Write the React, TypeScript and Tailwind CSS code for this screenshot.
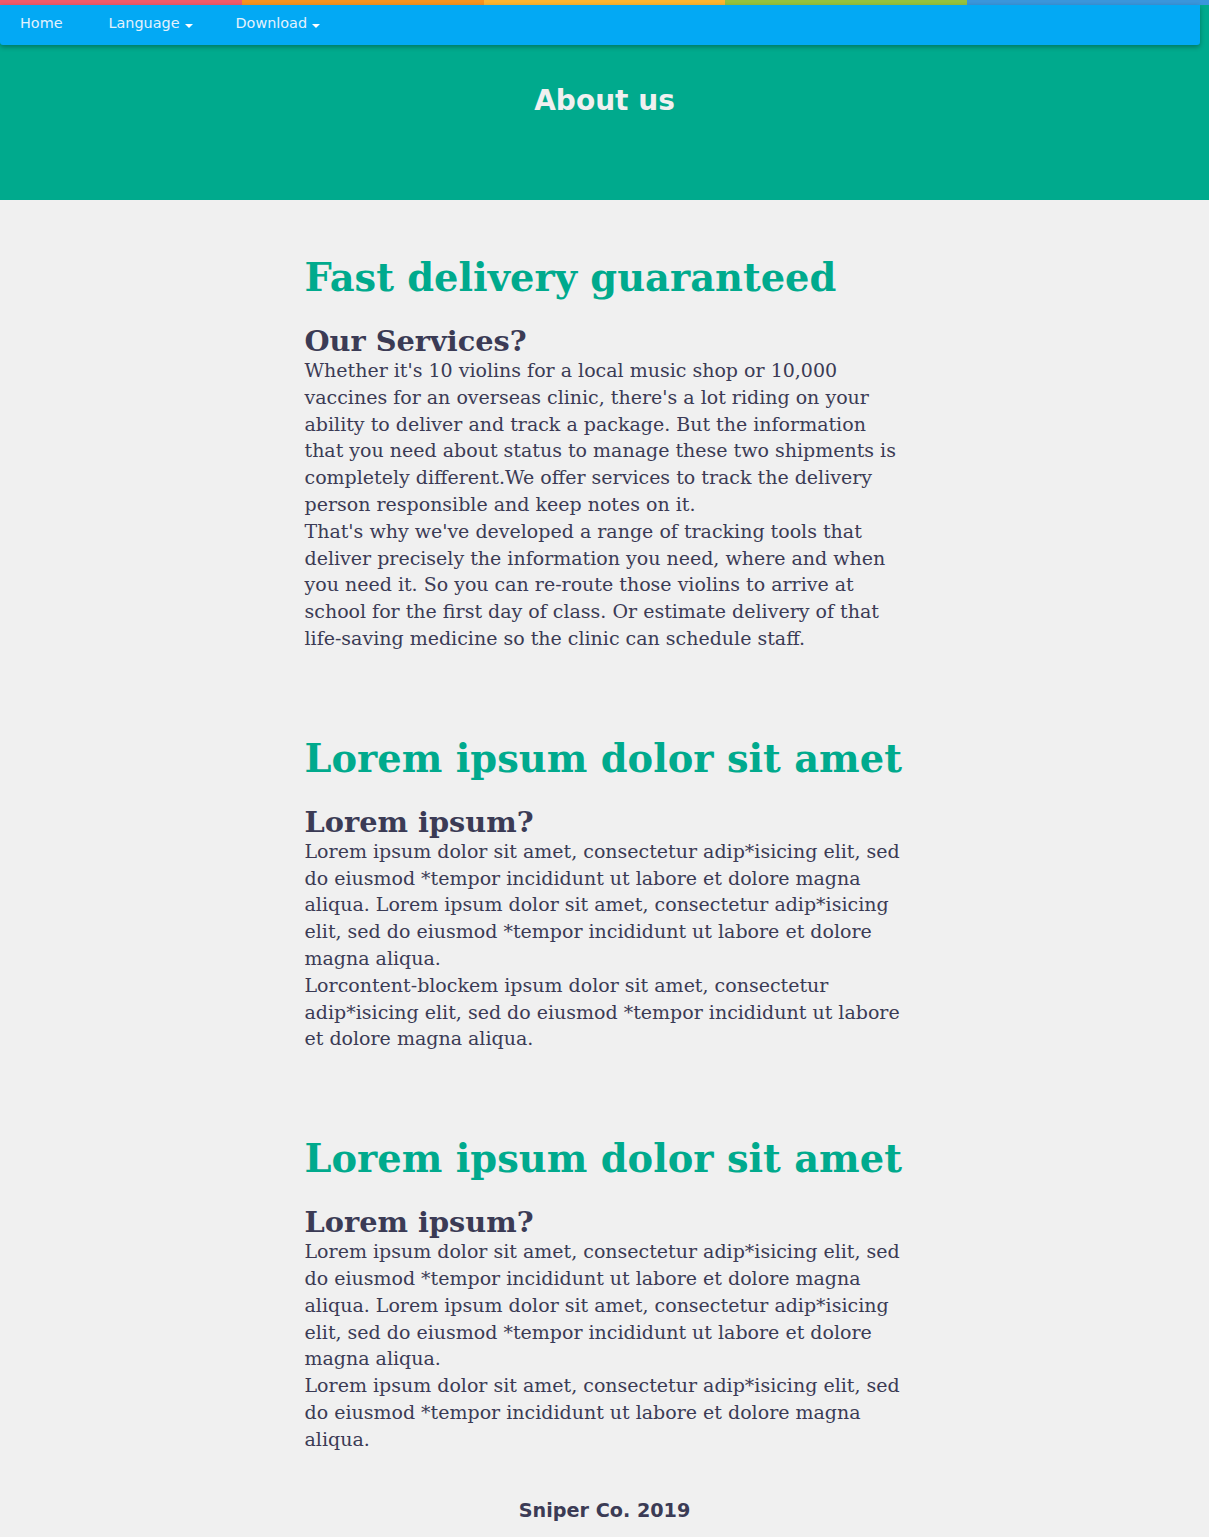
import React from "react";

const Caret = () => (
  <span className="inline-block ml-[5px] align-middle w-0 h-0 border-l-[4px] border-r-[4px] border-t-[4px] border-l-transparent border-r-transparent border-t-white translate-y-[2px]" />
);

const Section = ({ title, sub, paras }: { title: string; sub: string; paras: string[] }) => (
  <section>
    <h1 className="text-[38.4px] leading-[46px] font-bold text-[#00aa8d] whitespace-nowrap">{title}</h1>
    <h2 className="mt-[24px] text-[28.8px] leading-[32px] font-bold text-[#3b3b55]">{sub}</h2>
    {paras.map((p, i) => (
      <p key={i} className="text-[19px] leading-[26.8px] text-[#3b3b55]">{p}</p>
    ))}
  </section>
);

export default function App() {
  return (
    <div className="min-h-[1537px] bg-[#f0f0f0]" style={{ fontFamily: '"DejaVu Serif", serif' }}>
      <div className="flex h-[5px]">
        <div className="flex-1 bg-[#f05a6b]" />
        <div className="flex-1 bg-[#f7931e]" />
        <div className="flex-1 bg-[#fcb52f]" />
        <div className="flex-1 bg-[#95c23d]" />
        <div className="flex-1 bg-[#3a96db]" />
      </div>
      <div className="relative bg-[#00aa8d] h-[195px]">
        <nav
          className="absolute top-0 left-0 w-[1200px] h-[40px] bg-[#03a9f4] rounded-b-[3px] shadow-[0_2px_5px_rgba(0,0,0,0.3)] flex items-center pb-[2px] text-[14.4px] text-[#e3f2fd]"
          style={{ fontFamily: '"DejaVu Sans", sans-serif' }}
        >
          <span className="ml-[20px]">Home</span>
          <span className="ml-[46px]">Language<Caret /></span>
          <span className="ml-[43px]">Download<Caret /></span>
        </nav>
        <div
          className="pt-[79px] text-center text-[28px] font-bold text-[#f0f0f0] leading-[34px]"
          style={{ fontFamily: '"DejaVu Sans", sans-serif' }}
        >
          About us
        </div>
      </div>
      <main className="w-[600px] mx-auto pt-[55px] flex flex-col gap-[84px]">
        <Section
          title="Fast delivery guaranteed"
          sub="Our Services?"
          paras={[
            "Whether it's 10 violins for a local music shop or 10,000 vaccines for an overseas clinic, there's a lot riding on your ability to deliver and track a package. But the information that you need about status to manage these two shipments is completely different.We offer services to track the delivery person responsible and keep notes on it.",
            "That's why we've developed a range of tracking tools that deliver precisely the information you need, where and when you need it. So you can re-route those violins to arrive at school for the first day of class. Or estimate delivery of that life-saving medicine so the clinic can schedule staff.",
          ]}
        />
        <Section
          title="Lorem ipsum dolor sit amet"
          sub="Lorem ipsum?"
          paras={[
            "Lorem ipsum dolor sit amet, consectetur adip*isicing elit, sed do eiusmod *tempor incididunt ut labore et dolore magna aliqua. Lorem ipsum dolor sit amet, consectetur adip*isicing elit, sed do eiusmod *tempor incididunt ut labore et dolore magna aliqua.",
            "Lorcontent-blockem ipsum dolor sit amet, consectetur adip*isicing elit, sed do eiusmod *tempor incididunt ut labore et dolore magna aliqua.",
          ]}
        />
        <Section
          title="Lorem ipsum dolor sit amet"
          sub="Lorem ipsum?"
          paras={[
            "Lorem ipsum dolor sit amet, consectetur adip*isicing elit, sed do eiusmod *tempor incididunt ut labore et dolore magna aliqua. Lorem ipsum dolor sit amet, consectetur adip*isicing elit, sed do eiusmod *tempor incididunt ut labore et dolore magna aliqua.",
            "Lorem ipsum dolor sit amet, consectetur adip*isicing elit, sed do eiusmod *tempor incididunt ut labore et dolore magna aliqua.",
          ]}
        />
      </main>
      <footer
        className="text-center text-[19.2px] leading-[23px] font-bold text-[#3b3b55] mt-[46px] pb-[20px]"
        style={{ fontFamily: '"DejaVu Sans", sans-serif' }}
      >
        Sniper Co. 2019
      </footer>
    </div>
  );
}
